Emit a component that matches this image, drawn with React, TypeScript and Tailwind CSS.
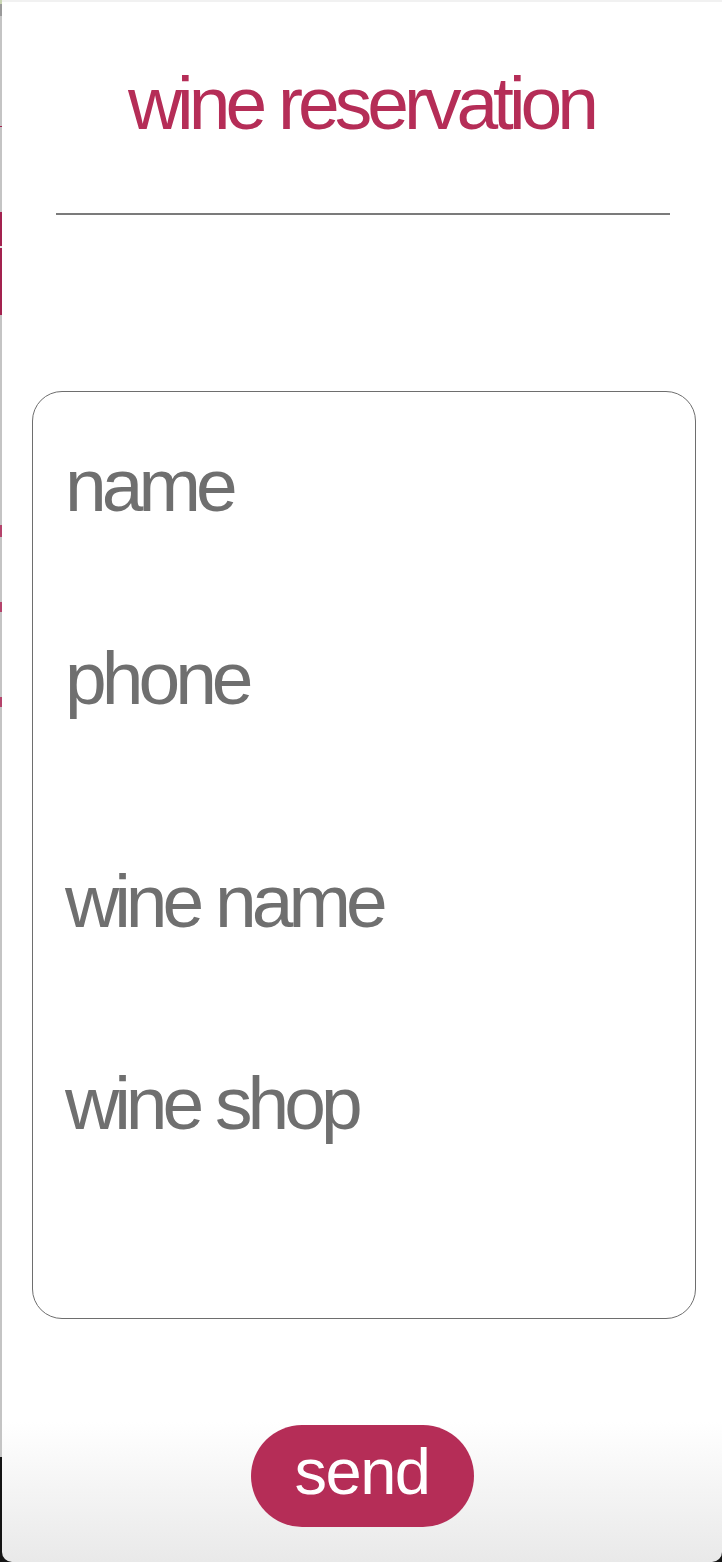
const fields = [
  { label: "name", gap: "mt-[56px]" },
  { label: "phone", gap: "mt-[118px]" },
  { label: "wine name", gap: "mt-[148px]" },
  { label: "wine shop", gap: "mt-[127px]" },
];

function EdgeStrip() {
  // the page peeking out behind the sheet on the left edge
  return (
    <div className="flex w-[2px] shrink-0 flex-col bg-[#c4c4c4]">
      <div className="h-[4px] bg-[#c9d6b4]" />
      <div className="h-[12px] bg-[#9a9a9a]" />
      <div className="h-[110px]" />
      <div className="h-[1px] bg-[#a3224f]" />
      <div className="h-[85px]" />
      <div className="h-[34px] bg-[#a3224f]" />
      <div className="h-[2px] bg-[#e5e5e5]" />
      <div className="h-[67px] bg-[#a3224f]" />
      <div className="h-[210px]" />
      <div className="h-[12px] bg-[#b4436b]" />
      <div className="h-[65px]" />
      <div className="h-[10px] bg-[#b4436b]" />
      <div className="h-[85px]" />
      <div className="h-[10px] bg-[#b4436b]" />
      <div className="h-[750px]" />
      <div className="flex-1 bg-[#141414]" />
    </div>
  );
}

export default function App() {
  return (
    <div className="flex h-[1562px] w-[722px] bg-[#161616] font-['Liberation_Sans',Arial,sans-serif]">
      <EdgeStrip />
      <div className="flex flex-1 flex-col">
        <div className="h-[2px] shrink-0 bg-[#f1f1f1]" />
        <div className="flex flex-1 flex-col items-start rounded-b-[10px] bg-linear-to-b from-white from-[91%] to-[#e9e9e9]">
          <h1 className="mt-[64px] w-full pr-[2px] text-center text-[75px] leading-none tracking-[-5px] text-[#b52d57]">
            wine reservation
          </h1>
          <div className="ml-[54px] mt-[72px] h-[2px] w-[614px] bg-[#7b7b7b]" />

          <div className="ml-[30px] mt-[176px] flex h-[928px] w-[664px] flex-col rounded-[30px] border-[1.5px] border-[#6e6e6e] pl-[32px]">
            {fields.map((f) => (
              <label
                key={f.label}
                className={`${f.gap} block text-[75px] leading-none tracking-[-5px] text-[#6f6f6f]`}
              >
                {f.label}
              </label>
            ))}
          </div>

          <button className="mx-auto mt-[106px] flex h-[102px] w-[223px] items-center justify-center rounded-full bg-[#b52d57] pb-[10px] text-[65px] leading-none tracking-[-1.5px] text-white">
            send
          </button>
        </div>
      </div>
    </div>
  );
}
